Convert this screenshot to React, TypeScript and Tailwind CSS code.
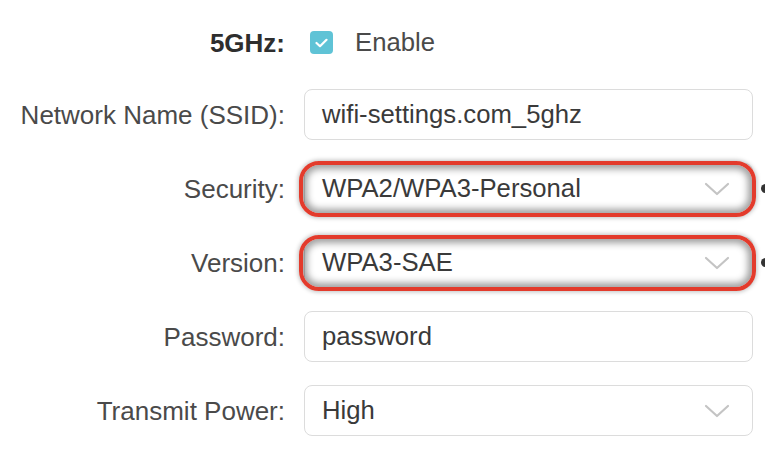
import React from "react";

const Chevron = () => (
  <svg width="26" height="14" viewBox="0 0 26 14" className="shrink-0">
    <polyline points="2,2 13,12 24,2" fill="none" stroke="#c4c4c4" strokeWidth="2.2" strokeLinecap="round" strokeLinejoin="round" />
  </svg>
);

function Row({ label, bold, children }: { label: string; bold?: boolean; children: React.ReactNode }) {
  return (
    <div className="flex items-center h-[51px]">
      <div
        className={`w-[286px] shrink-0 text-right pr-[1px] text-[26px] ${bold ? "font-bold text-[#2e2e2e]" : "text-[#4a4a4a]"}`}
      >
        {label}
      </div>
      <div className="ml-[18px] w-[449px] h-full relative">{children}</div>
    </div>
  );
}

function Box({ value, select, highlight }: { value: string; select?: boolean; highlight?: boolean }) {
  return (
    <>
      <div className="h-full w-full rounded-[8px] border border-[#dcdcdc] bg-white flex items-center pl-[17px] pr-[22px] text-[#3a3a3a] text-[25.7px]">
        <span className="flex-1">{value}</span>
        {select && <Chevron />}
      </div>
      {highlight && (
        <>
          <div className="absolute left-[-5px] right-[-3px] top-[-2px] bottom-[-3px] rounded-[20px] border-[4px] border-[#e33b2c] shadow-[inset_0_0_7px_4px_rgba(0,0,0,0.38),0_0_4px_1px_rgba(0,0,0,0.25)]" />
          <div className="absolute left-[457px] top-[21px] w-[9px] h-[9px] rounded-full bg-[#333]" />
        </>
      )}
    </>
  );
}

export default function App() {
  return (
    <div
      className="w-[765px] h-[457px] overflow-hidden bg-white leading-none"
      style={{ fontFamily: '"Liberation Sans", Arial, sans-serif' }}
    >
      <div className="flex flex-col pt-[17px]">
        <Row label="5GHz:" bold>
          <div className="h-full flex items-center pl-[6px]">
            <div className="w-[23px] h-[23px] rounded-[4px] bg-[#5fc3d6] flex items-center justify-center">
              <svg width="13" height="10" viewBox="0 0 13 10">
                <polyline points="1.5,5 5,8.2 11.5,1.8" fill="none" stroke="white" strokeWidth="2.2" strokeLinecap="round" strokeLinejoin="round" />
              </svg>
            </div>
            <span className="ml-[22px] text-[#4a4a4a] text-[25.7px]">Enable</span>
          </div>
        </Row>
        <div className="flex flex-col gap-[23px] mt-[21px]">
          <Row label="Network Name (SSID):">
            <Box value="wifi-settings.com_5ghz" />
          </Row>
          <Row label="Security:">
            <Box value="WPA2/WPA3-Personal" select highlight />
          </Row>
          <Row label="Version:">
            <Box value="WPA3-SAE" select highlight />
          </Row>
          <Row label="Password:">
            <Box value="password" />
          </Row>
          <Row label="Transmit Power:">
            <Box value="High" select />
          </Row>
          <Row label="">
            <Box value="" />
          </Row>
        </div>
      </div>
    </div>
  );
}
